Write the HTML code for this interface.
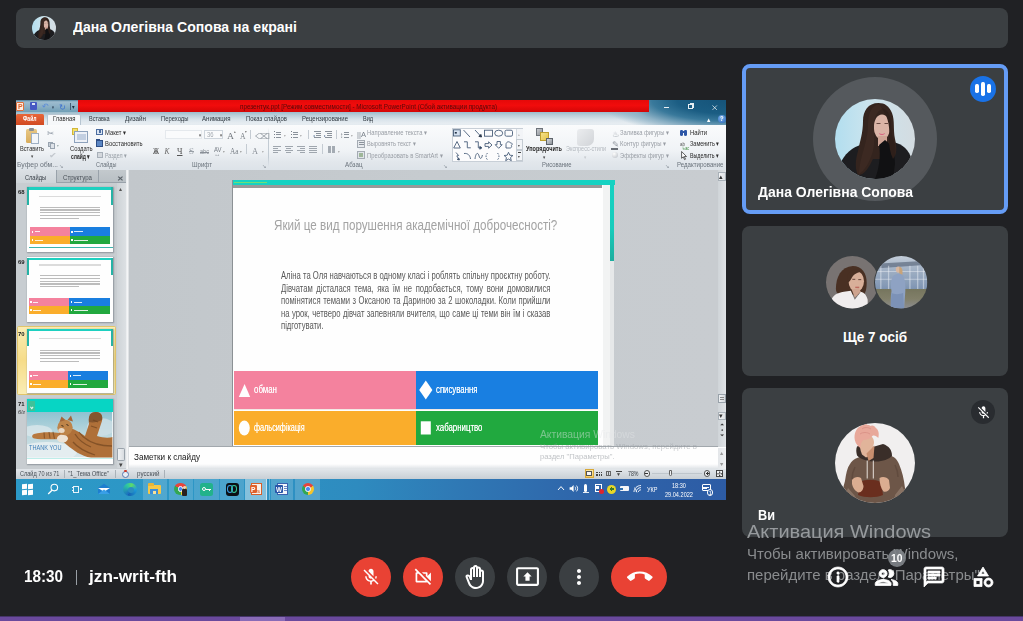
<!DOCTYPE html>
<html lang="uk"><head><meta charset="utf-8"><title>Meet</title>
<style>
html,body{margin:0;padding:0}
body{width:1023px;height:621px;overflow:hidden;background:#202124;position:relative;font-family:"Liberation Sans",sans-serif}
.t{position:absolute;white-space:nowrap;line-height:1;transform-origin:0 50%}
.r{position:absolute}
.c{position:absolute;border-radius:50%}
svg{position:absolute;overflow:visible}
#all{position:absolute;left:0;top:0;width:1023px;height:621px;opacity:.999}
#scr{position:absolute;left:16px;top:100px;width:710px;height:399.5px;overflow:hidden;will-change:transform}
#scri{position:absolute;left:-16px;top:-100px;width:1023px;height:621px;filter:blur(.35px)}
#scr .t,#scr .r,#scr svg{ }
</style></head><body><div id="all">

<div id="scr"><div id="scri">
<div class="r" style="left:16px;top:100px;width:710px;height:12.6px;background:linear-gradient(180deg,#4f7f9a 0,#9fbdd0 14%,#8db1c6 50%,#6b9cb4 100%);"></div>
<div class="r" style="left:16px;top:112px;width:710px;height:13.5px;background:linear-gradient(180deg,#9dbdcd 0,#bdd1dc 25%,#dbe5ec 55%,#e7edf2 80%,#e4ebf0 100%);"></div>
<div class="r" style="left:580px;top:100px;width:146px;height:25.5px;background:radial-gradient(ellipse 128px 36px at 100% 0%,#16547a 0,#1c5e84 38%,#3a7a9c 58%,#8fb3c7 78%,rgba(221,230,237,0) 100%);"></div>
<div class="r" style="left:77.5px;top:100px;width:571.5px;height:12.3px;background:linear-gradient(180deg,#e60a0a 0,#f20d0d 45%,#d40808 100%);"></div>
<div class="r" style="left:16.3px;top:101.8px;width:7.6px;height:8.8px;background:#fdeee4;border:0.8px solid #e0703c;border-radius:1px;box-sizing:border-box;"></div>
<span class="t" style="left:17.70px;top:103.00px;font-size:7.6px;color:#e0622c;font-weight:700;transform:scaleX(0.9074);">P</span>
<div class="r" style="left:30.2px;top:102.3px;width:6.4px;height:7.6px;background:#4659c4;border-radius:1px;"></div>
<div class="r" style="left:32px;top:102.5px;width:3.2px;height:2.6px;background:#dfe6f5;"></div>
<span class="t" style="left:42.30px;top:103.00px;font-size:8px;color:#5b8bd9;">↶</span>
<span class="t" style="left:51.50px;top:106.00px;font-size:4.5px;color:#2c3e55;transform:scaleX(0.7704);">▾</span>
<span class="t" style="left:59.00px;top:104.00px;font-size:8px;color:#3f72cf;transform:scaleX(1.0333);">↻</span>
<div class="r" style="left:69.5px;top:103.3px;width:0.8px;height:6.6px;background:#46607a;"></div>
<span class="t" style="left:72.00px;top:105.00px;font-size:5.5px;color:#1c2c3e;transform:scaleX(0.8727);">▾</span>
<span class="t" style="left:240.00px;top:103.00px;font-size:7.2px;color:#5a0a0a;transform:scaleX(0.8773);">презентук.ppt [Режим совместимости]  -  Microsoft PowerPoint (Сбой активации продукта)</span>
<div class="r" style="left:663.5px;top:107.3px;width:5.5px;height:1px;background:rgba(255,255,255,.9);"></div>
<div class="r" style="left:688px;top:104.2px;width:4.6px;height:4.6px;background:transparent;border:0.9px solid rgba(255,255,255,.9);box-sizing:border-box;"></div>
<div class="r" style="left:689.6px;top:103px;width:4.6px;height:4.6px;background:transparent;border-top:0.9px solid rgba(255,255,255,.9);border-right:0.9px solid rgba(255,255,255,.9);box-sizing:border-box;"></div>
<svg style="left:711.8px;top:104.8px" width="5.4" height="5.4" viewBox="0 0 7 7"><path d="M0.6 0.6L6.4 6.4M6.4 0.6L0.6 6.4" stroke="#fff" stroke-width="0.95" fill="none" opacity=".92"/></svg>
<div class="r" style="left:16px;top:113.8px;width:27.5px;height:11.4px;background:linear-gradient(180deg,#e8673a,#d24a22);border-radius:1.5px 1.5px 0 0;"></div>
<span class="t" style="left:22.70px;top:116.00px;font-size:6.8px;color:#fff;font-weight:700;transform:scaleX(0.7464);">Файл</span>
<div class="r" style="left:46.6px;top:113.8px;width:34.6px;height:12px;background:#f7f9fb;border:0.7px solid #b8c6d2;border-bottom:none;border-radius:2px 2px 0 0;box-sizing:border-box;"></div>
<span class="t" style="left:53.00px;top:116.00px;font-size:6.8px;color:#2e2e2e;transform:scaleX(0.8693);">Главная</span>
<span class="t" style="left:89.30px;top:116.00px;font-size:6.8px;color:#2f3840;transform:scaleX(0.8190);">Вставка</span>
<span class="t" style="left:124.50px;top:116.00px;font-size:6.8px;color:#2f3840;transform:scaleX(0.9187);">Дизайн</span>
<span class="t" style="left:160.50px;top:116.00px;font-size:6.8px;color:#2f3840;transform:scaleX(0.8622);">Переходы</span>
<span class="t" style="left:202.00px;top:116.00px;font-size:6.8px;color:#2f3840;transform:scaleX(0.8928);">Анимация</span>
<span class="t" style="left:245.60px;top:116.00px;font-size:6.8px;color:#2f3840;transform:scaleX(0.8736);">Показ слайдов</span>
<span class="t" style="left:301.70px;top:116.00px;font-size:6.8px;color:#2f3840;transform:scaleX(0.8760);">Рецензирование</span>
<span class="t" style="left:362.70px;top:116.00px;font-size:6.8px;color:#2f3840;transform:scaleX(0.8129);">Вид</span>
<span class="t" style="left:707.00px;top:116.00px;font-size:7px;color:#fff;transform:scaleX(0.9524);">▴</span>
<div class="c" style="left:717.5px;top:114.5px;width:8px;height:8px;background:radial-gradient(circle at 40% 35%,#7db4ec,#2a62b8)"></div>
<span class="t" style="left:719.80px;top:116.00px;font-size:6.5px;color:#fff;font-weight:700;transform:scaleX(0.9067);">?</span>
<div class="r" style="left:16px;top:125.3px;width:710px;height:45.5px;background:linear-gradient(180deg,#fbfcfd 0,#f1f4f7 55%,#e3e8ed 80%,#dde3e9 100%);"></div>
<div class="r" style="left:16px;top:170px;width:710px;height:1px;background:#a9b1b8;"></div>
<div class="r" style="left:63.5px;top:128px;width:0.8px;height:39px;background:linear-gradient(180deg,rgba(180,190,200,0),#c3ccd4 30%,#c3ccd4 75%,rgba(180,190,200,0));"></div>
<div class="r" style="left:149.5px;top:128px;width:0.8px;height:39px;background:linear-gradient(180deg,rgba(180,190,200,0),#c3ccd4 30%,#c3ccd4 75%,rgba(180,190,200,0));"></div>
<div class="r" style="left:267.8px;top:128px;width:0.8px;height:39px;background:linear-gradient(180deg,rgba(180,190,200,0),#c3ccd4 30%,#c3ccd4 75%,rgba(180,190,200,0));"></div>
<div class="r" style="left:448.5px;top:128px;width:0.8px;height:39px;background:linear-gradient(180deg,rgba(180,190,200,0),#c3ccd4 30%,#c3ccd4 75%,rgba(180,190,200,0));"></div>
<div class="r" style="left:672.5px;top:128px;width:0.8px;height:39px;background:linear-gradient(180deg,rgba(180,190,200,0),#c3ccd4 30%,#c3ccd4 75%,rgba(180,190,200,0));"></div>
<span class="t" style="left:17.00px;top:162.00px;font-size:6.6px;color:#6a737c;transform:scaleX(1.0416);">Буфер обм...</span>
<span class="t" style="left:96.00px;top:162.00px;font-size:6.6px;color:#6a737c;transform:scaleX(0.8343);">Слайды</span>
<span class="t" style="left:192.00px;top:162.00px;font-size:6.6px;color:#6a737c;transform:scaleX(0.9210);">Шрифт</span>
<span class="t" style="left:344.50px;top:162.00px;font-size:6.6px;color:#6a737c;transform:scaleX(0.9452);">Абзац</span>
<span class="t" style="left:541.50px;top:162.00px;font-size:6.6px;color:#6a737c;transform:scaleX(0.8875);">Рисование</span>
<span class="t" style="left:677.00px;top:162.00px;font-size:6.6px;color:#6a737c;transform:scaleX(0.9248);">Редактирование</span>
<span class="t" style="left:58.50px;top:164.00px;font-size:5px;color:#8a939c;transform:scaleX(1.0667);">↘</span>
<span class="t" style="left:262.00px;top:164.00px;font-size:5px;color:#8a939c;transform:scaleX(1.0667);">↘</span>
<span class="t" style="left:442.50px;top:164.00px;font-size:5px;color:#8a939c;transform:scaleX(1.0667);">↘</span>
<span class="t" style="left:665.00px;top:164.00px;font-size:5px;color:#8a939c;transform:scaleX(1.0667);">↘</span>
<div class="r" style="left:25.5px;top:129.2px;width:11px;height:13.5px;background:linear-gradient(180deg,#e9c987,#d9ad5c);border-radius:1.5px;"></div>
<div class="r" style="left:28.5px;top:128px;width:5px;height:2.6px;background:#8b8f95;border-radius:1px;"></div>
<div class="r" style="left:30.5px;top:133px;width:8.5px;height:10.8px;background:#f4f7fb;border:0.6px solid #9fb0c4;box-sizing:border-box;"></div>
<span class="t" style="left:19.70px;top:146.00px;font-size:6.8px;color:#2e2e2e;transform:scaleX(0.8326);">Вставить</span>
<span class="t" style="left:31.00px;top:155.00px;font-size:4.5px;color:#444;transform:scaleX(0.8889);">▾</span>
<span class="t" style="left:47.00px;top:130.00px;font-size:7.5px;color:#8d97a3;transform:scaleX(1.0667);">✂</span>
<div class="r" style="left:48px;top:141.5px;width:4.5px;height:5.5px;background:#c9d0d8;border:0.5px solid #9aa5b1;box-sizing:border-box;"></div>
<div class="r" style="left:50px;top:143px;width:4.5px;height:5.5px;background:#dfe4ea;border:0.5px solid #9aa5b1;box-sizing:border-box;"></div>
<span class="t" style="left:57.00px;top:144.00px;font-size:4px;color:#9aa;transform:scaleX(0.8333);">▾</span>
<span class="t" style="left:48.50px;top:152.00px;font-size:8px;color:#c3c8ce;transform:scaleX(1.1667);">✔</span>
<div class="r" style="left:71.6px;top:128.4px;width:6.5px;height:6.2px;background:#f5e26a;border:0.5px solid #d2b73a;box-sizing:border-box;"></div>
<div class="r" style="left:74.3px;top:131px;width:14px;height:11.5px;background:#eef2f8;border:0.7px solid #8ea3bd;box-sizing:border-box;"></div>
<div class="r" style="left:76.5px;top:134px;width:9.6px;height:5.5px;background:#c3d0e2;"></div>
<span class="t" style="left:69.50px;top:146.00px;font-size:6.8px;color:#2e2e2e;transform:scaleX(0.8706);">Создать</span>
<span class="t" style="left:71.00px;top:154.00px;font-size:6.8px;color:#2e2e2e;font-weight:700;transform:scaleX(0.7307);">слайд ▾</span>
<div class="r" style="left:96px;top:128.5px;width:6.5px;height:6px;background:#dbe5f3;border:0.7px solid #4d6ea0;box-sizing:border-box;"></div>
<div class="r" style="left:98.5px;top:130px;width:2.8px;height:3px;background:#4d6ea0;"></div>
<span class="t" style="left:104.50px;top:129.00px;font-size:7px;color:#2e2e2e;transform:scaleX(0.8331);">Макет ▾</span>
<div class="r" style="left:96px;top:140px;width:7px;height:6.5px;background:#5c87c4;border:0.6px solid #2e4f86;box-sizing:border-box;"></div>
<div class="r" style="left:96px;top:139px;width:3.5px;height:2.2px;background:#2e4f86;"></div>
<span class="t" style="left:104.50px;top:140.00px;font-size:7px;color:#2e2e2e;transform:scaleX(0.8366);">Восстановить</span>
<div class="r" style="left:96.5px;top:151.5px;width:6px;height:6px;background:#d5d9de;border:0.5px solid #a8b0b9;box-sizing:border-box;"></div>
<span class="t" style="left:104.50px;top:152.00px;font-size:7px;color:#9aa1a8;transform:scaleX(0.7583);">Раздел ▾</span>
<div class="r" style="left:165px;top:129.5px;width:37px;height:9.5px;background:#fbfcfd;border:0.6px solid #e6eaee;box-sizing:border-box;"></div>
<span class="t" style="left:199.00px;top:134.00px;font-size:4.5px;color:#555;transform:scaleX(0.8296);">▾</span>
<div class="r" style="left:204px;top:129.5px;width:19px;height:9.5px;background:#fbfcfd;border:0.6px solid #cfd6dd;box-sizing:border-box;"></div>
<span class="t" style="left:207.00px;top:132.00px;font-size:6.5px;color:#a5abb2;transform:scaleX(0.8990);">36</span>
<span class="t" style="left:219.50px;top:134.00px;font-size:4.5px;color:#555;transform:scaleX(0.8296);">▾</span>
<span class="t" style="left:227.00px;top:132.00px;font-size:9px;color:#6f757c;font-family:'Liberation Serif',serif;transform:scaleX(1.0770);">A</span>
<span class="t" style="left:233.50px;top:130.00px;font-size:4px;color:#777;transform:scaleX(0.8333);">▴</span>
<span class="t" style="left:239.50px;top:133.00px;font-size:7.5px;color:#7a8087;font-family:'Liberation Serif',serif;transform:scaleX(1.0154);">A</span>
<span class="t" style="left:244.50px;top:130.00px;font-size:4px;color:#777;transform:scaleX(0.8333);">▾</span>
<div class="r" style="left:250.3px;top:130px;width:0.7px;height:9px;background:#c5ccd3;"></div>
<span class="t" style="left:255.00px;top:133.00px;font-size:8px;color:#9aa1a8;transform:scaleX(1.3333);">⌫</span>
<span class="t" style="left:152.50px;top:148.00px;font-size:7.5px;color:#555;font-family:'Liberation Serif',serif;font-weight:700;transform:scaleX(0.8091);">Ж</span>
<span class="t" style="left:164.50px;top:148.00px;font-size:7.5px;color:#666;font-family:'Liberation Serif',serif;font-style:italic;">К</span>
<span class="t" style="left:176.50px;top:148.00px;font-size:7.5px;color:#555;font-family:'Liberation Serif',serif;transform:scaleX(1.1283);text-decoration:underline;">Ч</span>
<span class="t" style="left:189.00px;top:148.00px;font-size:7.5px;color:#9aa1a8;font-family:'Liberation Serif',serif;transform:scaleX(1.1987);text-decoration:line-through;">S</span>
<span class="t" style="left:200.00px;top:149.00px;font-size:6.5px;color:#8a9098;transform:scaleX(0.8588);text-decoration:line-through;">abc</span>
<span class="t" style="left:213.50px;top:147.00px;font-size:6.5px;color:#7a8088;transform:scaleX(0.9159);">AV</span>
<span class="t" style="left:214.00px;top:152.00px;font-size:5px;color:#7a8088;transform:scaleX(1.3000);">↔</span>
<span class="t" style="left:222.50px;top:150.00px;font-size:4px;color:#999;transform:scaleX(0.8333);">▾</span>
<span class="t" style="left:229.50px;top:148.00px;font-size:7.5px;color:#7a8088;font-family:'Liberation Serif',serif;transform:scaleX(0.9720);">Aa</span>
<span class="t" style="left:239.50px;top:150.00px;font-size:4px;color:#999;transform:scaleX(0.8333);">▾</span>
<div class="r" style="left:245.5px;top:144px;width:0.7px;height:9.5px;background:#c5ccd3;"></div>
<span class="t" style="left:252.00px;top:147.00px;font-size:8.5px;color:#8a9098;font-family:'Liberation Serif',serif;transform:scaleX(0.9774);">A</span>
<span class="t" style="left:261.50px;top:150.00px;font-size:4px;color:#aaa;transform:scaleX(0.8333);">▾</span>
<div class="r" style="left:274px;top:131.3px;width:1.2px;height:1.2px;background:#7b838c;"></div>
<div class="r" style="left:276.2px;top:131.5px;width:5px;height:0.8px;background:#8b939c;"></div>
<div class="r" style="left:274px;top:133.9px;width:1.2px;height:1.2px;background:#7b838c;"></div>
<div class="r" style="left:276.2px;top:134.1px;width:5px;height:0.8px;background:#8b939c;"></div>
<div class="r" style="left:274px;top:136.5px;width:1.2px;height:1.2px;background:#7b838c;"></div>
<div class="r" style="left:276.2px;top:136.7px;width:5px;height:0.8px;background:#8b939c;"></div>
<span class="t" style="left:283.50px;top:134.00px;font-size:4px;color:#aaa;transform:scaleX(0.8333);">▾</span>
<div class="r" style="left:290.5px;top:131.3px;width:1.2px;height:1.2px;background:#7b838c;"></div>
<div class="r" style="left:292.7px;top:131.5px;width:5px;height:0.8px;background:#8b939c;"></div>
<div class="r" style="left:290.5px;top:133.9px;width:1.2px;height:1.2px;background:#7b838c;"></div>
<div class="r" style="left:292.7px;top:134.1px;width:5px;height:0.8px;background:#8b939c;"></div>
<div class="r" style="left:290.5px;top:136.5px;width:1.2px;height:1.2px;background:#7b838c;"></div>
<div class="r" style="left:292.7px;top:136.7px;width:5px;height:0.8px;background:#8b939c;"></div>
<span class="t" style="left:300.00px;top:134.00px;font-size:4px;color:#aaa;transform:scaleX(0.8333);">▾</span>
<div class="r" style="left:308.3px;top:130px;width:0.7px;height:9px;background:#c5ccd3;"></div>
<div class="r" style="left:313.5px;top:130.8px;width:7px;height:0.8px;background:#8b939c;"></div>
<div class="r" style="left:315.5px;top:133.0px;width:5px;height:0.8px;background:#8b939c;"></div>
<div class="r" style="left:315.5px;top:135.20000000000002px;width:5px;height:0.8px;background:#8b939c;"></div>
<div class="r" style="left:313.5px;top:137.4px;width:7px;height:0.8px;background:#8b939c;"></div>
<span class="t" style="left:313.00px;top:134.00px;font-size:4px;color:#6b80a0;transform:scaleX(0.8333);">◂</span>
<div class="r" style="left:324.5px;top:130.8px;width:7px;height:0.8px;background:#8b939c;"></div>
<div class="r" style="left:326.5px;top:133.0px;width:5px;height:0.8px;background:#8b939c;"></div>
<div class="r" style="left:326.5px;top:135.20000000000002px;width:5px;height:0.8px;background:#8b939c;"></div>
<div class="r" style="left:324.5px;top:137.4px;width:7px;height:0.8px;background:#8b939c;"></div>
<span class="t" style="left:324.00px;top:134.00px;font-size:4px;color:#6b80a0;transform:scaleX(0.8333);">▸</span>
<div class="r" style="left:336.3px;top:130px;width:0.7px;height:9px;background:#c5ccd3;"></div>
<span class="t" style="left:340.00px;top:132.00px;font-size:8px;color:#7b838c;transform:scaleX(0.7500);">↕</span>
<div class="r" style="left:344px;top:131.5px;width:5px;height:0.8px;background:#8b939c;"></div>
<div class="r" style="left:344px;top:134.0px;width:5px;height:0.8px;background:#8b939c;"></div>
<div class="r" style="left:344px;top:136.5px;width:5px;height:0.8px;background:#8b939c;"></div>
<span class="t" style="left:351.00px;top:134.00px;font-size:4px;color:#aaa;transform:scaleX(0.8333);">▾</span>
<div class="r" style="left:273px;top:145.5px;width:7.5px;height:1px;background:#a0a7af;"></div>
<div class="r" style="left:273px;top:147.5px;width:5px;height:1px;background:#a0a7af;"></div>
<div class="r" style="left:273px;top:149.5px;width:7.5px;height:1px;background:#a0a7af;"></div>
<div class="r" style="left:273px;top:151.5px;width:5px;height:1px;background:#a0a7af;"></div>
<div class="r" style="left:285.0px;top:145.5px;width:7.5px;height:1px;background:#a0a7af;"></div>
<div class="r" style="left:286.25px;top:147.5px;width:5px;height:1px;background:#a0a7af;"></div>
<div class="r" style="left:285.0px;top:149.5px;width:7.5px;height:1px;background:#a0a7af;"></div>
<div class="r" style="left:286.25px;top:151.5px;width:5px;height:1px;background:#a0a7af;"></div>
<div class="r" style="left:297.0px;top:145.5px;width:7.5px;height:1px;background:#a0a7af;"></div>
<div class="r" style="left:299.5px;top:147.5px;width:5px;height:1px;background:#a0a7af;"></div>
<div class="r" style="left:297.0px;top:149.5px;width:7.5px;height:1px;background:#a0a7af;"></div>
<div class="r" style="left:299.5px;top:151.5px;width:5px;height:1px;background:#a0a7af;"></div>
<div class="r" style="left:309px;top:145.5px;width:7.5px;height:1px;background:#a0a7af;"></div>
<div class="r" style="left:309px;top:147.5px;width:7.5px;height:1px;background:#a0a7af;"></div>
<div class="r" style="left:309px;top:149.5px;width:7.5px;height:1px;background:#a0a7af;"></div>
<div class="r" style="left:309px;top:151.5px;width:7.5px;height:1px;background:#a0a7af;"></div>
<div class="r" style="left:321.5px;top:144px;width:0.7px;height:9.5px;background:#c5ccd3;"></div>
<div class="r" style="left:327.5px;top:145.5px;width:3.3px;height:7px;background:#a5acb4;"></div>
<div class="r" style="left:331.8px;top:145.5px;width:3.3px;height:7px;background:#a5acb4;"></div>
<span class="t" style="left:337.50px;top:150.00px;font-size:4px;color:#aaa;transform:scaleX(0.8333);">▾</span>
<span class="t" style="left:356.50px;top:131.00px;font-size:8px;color:#7b838c;transform:scaleX(0.9481);">||A</span>
<span class="t" style="left:367.00px;top:129.00px;font-size:7px;color:#9a9fa6;transform:scaleX(0.8361);">Направление текста ▾</span>
<div class="r" style="left:357px;top:139.5px;width:8px;height:8px;background:#e7eaee;border:0.6px solid #a5acb4;box-sizing:border-box;"></div>
<div class="r" style="left:358.5px;top:142.2px;width:5px;height:0.8px;background:#8b939c;"></div>
<div class="r" style="left:358.5px;top:144.2px;width:5px;height:0.8px;background:#8b939c;"></div>
<span class="t" style="left:367.00px;top:140.00px;font-size:7px;color:#9a9fa6;transform:scaleX(0.8101);">Выровнять текст ▾</span>
<div class="r" style="left:357px;top:151px;width:8px;height:8px;background:#e1e5ea;border:0.6px solid #a5acb4;box-sizing:border-box;"></div>
<div class="r" style="left:359px;top:153px;width:4px;height:4px;background:#9fb79a;"></div>
<span class="t" style="left:367.00px;top:152.00px;font-size:7px;color:#9a9fa6;transform:scaleX(0.8360);">Преобразовать в SmartArt ▾</span>
<div class="r" style="left:451.5px;top:128px;width:71.3px;height:33.5px;background:#fdfdfe;border:0.6px solid #c9d0d8;box-sizing:border-box;"></div>
<div class="r" style="left:515.5px;top:128.5px;width:7px;height:10.5px;background:#f3f5f8;border-left:0.6px solid #d5dbe1;box-sizing:border-box;"></div>
<div class="r" style="left:515.5px;top:139.3px;width:7px;height:10.5px;background:#f3f5f8;border:0.6px solid #c5ccd3;box-sizing:border-box;"></div>
<div class="r" style="left:515.5px;top:150.3px;width:7px;height:10.7px;background:#f3f5f8;border:0.6px solid #c5ccd3;box-sizing:border-box;"></div>
<span class="t" style="left:517.70px;top:133.00px;font-size:4px;color:#bbb;transform:scaleX(0.8667);">▴</span>
<span class="t" style="left:517.70px;top:144.00px;font-size:4px;color:#444;transform:scaleX(0.8667);">▾</span>
<span class="t" style="left:517.70px;top:155.00px;font-size:4px;color:#444;transform:scaleX(0.8667);">▾</span>
<div class="r" style="left:517.5px;top:152.3px;width:3.2px;height:0.7px;background:#444;"></div>
<svg style="left:451px;top:127px" width="62" height="36" viewBox="451 127 62 36" fill="none" stroke="#4a5f7a" stroke-width="0.9">
<rect x="453.5" y="129.8" width="6.8" height="6.2" fill="#d7e3f2"/><rect x="454.8" y="132" width="2" height="1.6" fill="#27364a" stroke="none"/>
<path d="M463.5 130l6.5 7"/><path d="M475 130l6 6.5"/><path d="M481.5 137l-2.6-0.6 2-2z" fill="#27364a" stroke="#27364a"/>
<rect x="484.5" y="130.2" width="8" height="6"/><ellipse cx="498.7" cy="133.2" rx="4" ry="3"/><rect x="505" y="130.2" width="7.5" height="6" rx="1.4"/>
<path d="M457 141.5l3.3 6.5h-6.6z"/><path d="M464 141.8h3.3v6h3.5"/><path d="M475 141.8h3.3v6h3"/><path d="M482 147.8l-2.2-1.4v2.8z" fill="#27364a"/>
<path d="M485 143.6h3.6v-1.8l3.4 3.2-3.4 3.2v-1.8H485z"/><path d="M497 141.5h3.4v3.2h1.8l-3.5 3.6-3.5-3.6h1.8z"/><path d="M506 148v-3.5c0-2.6 2.8-3.6 4.2-1.8 2-.2 2.6 2 1.2 2.8 .8 1.6-.4 2.6-1.6 2.5z"/>
<path d="M456 152.5l2.6 3-1.8.4 2.2 3.8" /><path d="M459.4 160l-2.2-.5 1.6-1.5z" fill="#27364a"/>
<path d="M464 153.5c3.5-.5 6 1.5 6.5 5.5"/><path d="M475 159c.8-6.5 3-7 4-3.2s2.6 3.4 3.4-.8"/>
<path d="M487.5 153c-2 1.8-2 5 0 6.8" stroke-dasharray="1.6 1.2"/><path d="M497.5 153c2 1.8 2 5 0 6.8" stroke-dasharray="1.6 1.2"/>
<path d="M508.5 152.3l1.3 2.9 3.1.3-2.4 2.1.8 3.1-2.8-1.7-2.8 1.7.8-3.1-2.4-2.1 3.1-.3z"/>
</svg>
<div class="r" style="left:535.5px;top:128px;width:7.5px;height:7.5px;background:linear-gradient(135deg,#c9ccd0,#8e9399);border:0.6px solid #6e747b;box-sizing:border-box;"></div>
<div class="r" style="left:539.5px;top:131.5px;width:9.5px;height:9.5px;background:linear-gradient(135deg,#f6e28a,#e6c54c);border:0.6px solid #bfa030;box-sizing:border-box;"></div>
<div class="r" style="left:545.5px;top:137.5px;width:7.5px;height:7.5px;background:linear-gradient(135deg,#d9dce0,#8e9399);border:0.6px solid #5e646b;box-sizing:border-box;"></div>
<span class="t" style="left:526.00px;top:146.00px;font-size:6.8px;color:#2a2a2a;font-weight:700;transform:scaleX(0.8144);">Упорядочить</span>
<span class="t" style="left:542.50px;top:156.00px;font-size:4.5px;color:#444;transform:scaleX(0.8889);">▾</span>
<div class="r" style="left:577px;top:128.5px;width:16.5px;height:17px;background:linear-gradient(135deg,#eceef0,#d2d5d9);border-radius:3px 3px 7px 3px;"></div>
<span class="t" style="left:565.50px;top:146.00px;font-size:6.8px;color:#b5bac0;transform:scaleX(0.8044);">Экспресс-стили</span>
<span class="t" style="left:584.00px;top:156.00px;font-size:4.5px;color:#c5c9ce;transform:scaleX(0.8889);">▾</span>
<span class="t" style="left:611.50px;top:131.00px;font-size:7.5px;color:#aab0b7;transform:scaleX(1.0667);">♨</span>
<span class="t" style="left:620.00px;top:129.00px;font-size:7px;color:#9a9fa6;transform:scaleX(0.8326);">Заливка фигуры ▾</span>
<span class="t" style="left:611.50px;top:141.00px;font-size:7.5px;color:#9aa0a7;transform:scaleX(1.0667);">✎</span>
<div class="r" style="left:611px;top:148.2px;width:7px;height:1.4px;background:#6b7077;"></div>
<span class="t" style="left:620.00px;top:140.00px;font-size:7px;color:#9a9fa6;transform:scaleX(0.8460);">Контур фигуры ▾</span>
<div class="c" style="left:611.5px;top:151.5px;width:6px;height:6px;background:radial-gradient(circle at 35% 30%,#fff,#b9bec5)"></div>
<span class="t" style="left:620.00px;top:152.00px;font-size:7px;color:#9a9fa6;transform:scaleX(0.8265);">Эффекты фигур ▾</span>
<div class="r" style="left:680px;top:130px;width:3.2px;height:6px;background:#2f58a8;border-radius:1.2px 1.2px 1.6px 1.6px;"></div>
<div class="r" style="left:684.3px;top:130px;width:3.2px;height:6px;background:#2f58a8;border-radius:1.2px 1.2px 1.6px 1.6px;"></div>
<div class="r" style="left:682.5px;top:131px;width:2.5px;height:2px;background:#2f58a8;"></div>
<span class="t" style="left:690.00px;top:129.00px;font-size:7px;color:#2a2a2a;transform:scaleX(0.8511);">Найти</span>
<span class="t" style="left:680.00px;top:142.00px;font-size:5px;color:#555;transform:scaleX(0.8990);">ab</span>
<span class="t" style="left:682.00px;top:147.00px;font-size:4.5px;color:#3a8a3a;transform:scaleX(0.7997);">↳ac</span>
<span class="t" style="left:690.00px;top:140.00px;font-size:7px;color:#2a2a2a;transform:scaleX(0.7883);">Заменить  ▾</span>
<svg style="left:681px;top:151px" width="6" height="9" viewBox="0 0 6 9"><path d="M0.6 0.5v6.8l1.7-1.5 1.2 2.8 1-.4-1.2-2.7h2.2z" fill="#fff" stroke="#222" stroke-width="0.7"/></svg>
<span class="t" style="left:690.00px;top:152.00px;font-size:7px;color:#2a2a2a;transform:scaleX(0.7597);">Выделить ▾</span>
<div class="r" style="left:16px;top:170px;width:110px;height:298.5px;background:#c9ced2;"></div>
<div class="r" style="left:16px;top:170.3px;width:110px;height:12.5px;background:linear-gradient(180deg,#c4cace,#b9c0c5);"></div>
<div class="r" style="left:16px;top:170.3px;width:40.5px;height:12.8px;background:linear-gradient(180deg,#dde2e6,#cfd5d9);border-right:0.7px solid #9aa3ab;box-sizing:border-box;"></div>
<div class="r" style="left:56.5px;top:170.3px;width:42px;height:12.3px;background:transparent;border-right:0.7px solid #9aa3ab;border-bottom:0.7px solid #9aa3ab;box-sizing:border-box;"></div>
<div class="r" style="left:98.5px;top:182px;width:27px;height:0.7px;background:#9aa3ab;"></div>
<span class="t" style="left:24.50px;top:174.00px;font-size:7px;color:#3a4148;transform:scaleX(0.8059);">Слайды</span>
<span class="t" style="left:63.00px;top:174.00px;font-size:7px;color:#4a5158;transform:scaleX(0.8732);">Структура</span>
<span class="t" style="left:117.00px;top:175.00px;font-size:7px;color:#4a5158;font-weight:700;transform:scaleX(1.1429);opacity:0.85;">✕</span>
<div class="r" style="left:116.5px;top:183px;width:9px;height:285px;background:linear-gradient(90deg,#cfd4d8,#dde1e4);"></div>
<span class="t" style="left:118.80px;top:186.00px;font-size:6px;color:#555;">▴</span>
<span class="t" style="left:118.60px;top:462.00px;font-size:6.5px;color:#444;transform:scaleX(1.0256);">▾</span>
<div class="r" style="left:117.2px;top:448px;width:7.6px;height:12.5px;background:linear-gradient(90deg,#f2f4f6,#d9dde1);border:0.6px solid #9aa3ab;border-radius:1.2px;box-sizing:border-box;"></div>
<div class="r" style="left:125.5px;top:170px;width:3.5px;height:298.5px;background:linear-gradient(90deg,#e9ecee,#f5f6f7 50%,#d5d9dc);"></div>
<div class="r" style="left:27.2px;top:187.0px;width:85.4px;height:64.6px;background:#fff;box-shadow:0 0 1.2px .5px rgba(90,98,106,.5);"></div>
<div class="r" style="left:27.3px;top:187.3px;width:85.4px;height:2.6px;background:#1fd1c1;"></div>
<div class="r" style="left:27.3px;top:187.3px;width:2px;height:17.5px;background:#27b3a6;"></div>
<div class="r" style="left:110.7px;top:187.3px;width:2px;height:17.5px;background:#27b3a6;"></div>
<span class="t" style="left:18.30px;top:189.00px;font-size:6.2px;color:#222;font-weight:700;transform:scaleX(0.9570);">68</span>
<div class="r" style="left:39px;top:195.70000000000002px;width:62px;height:1.3px;background:#dcdcdc;"></div>
<div class="r" style="left:40px;top:206.60000000000002px;width:60px;height:1.3px;background:#bdbdbd;"></div>
<div class="r" style="left:40px;top:209.35000000000002px;width:60px;height:1.3px;background:#bdbdbd;"></div>
<div class="r" style="left:40px;top:212.10000000000002px;width:60px;height:1.3px;background:#bdbdbd;"></div>
<div class="r" style="left:40px;top:214.85000000000002px;width:60px;height:1.3px;background:#bdbdbd;"></div>
<div class="r" style="left:40px;top:217.60000000000002px;width:39px;height:1.3px;background:#bdbdbd;"></div>
<div class="r" style="left:30px;top:227.3px;width:39.5px;height:8.5px;background:#f5839f;"></div>
<div class="r" style="left:69.5px;top:227.3px;width:40.0px;height:8.5px;background:#1a7fe0;"></div>
<div class="r" style="left:30px;top:235.70000000000002px;width:39.5px;height:8.5px;background:#fbae2c;"></div>
<div class="r" style="left:69.5px;top:235.70000000000002px;width:40.0px;height:8.5px;background:#22a93f;"></div>
<div class="r" style="left:31.5px;top:230.70000000000002px;width:1.6px;height:2.2px;background:#fff;"></div>
<div class="r" style="left:34.5px;top:231.3px;width:5px;height:1px;background:rgba(255,255,255,.85);"></div>
<div class="r" style="left:71.3px;top:230.70000000000002px;width:1.6px;height:2.2px;background:#fff;"></div>
<div class="r" style="left:74.3px;top:231.3px;width:8.5px;height:1px;background:rgba(255,255,255,.85);"></div>
<div class="r" style="left:31.5px;top:239.10000000000002px;width:1.6px;height:2.2px;background:#fff;"></div>
<div class="r" style="left:34.5px;top:239.70000000000002px;width:8px;height:1px;background:rgba(255,255,255,.85);"></div>
<div class="r" style="left:71.3px;top:239.10000000000002px;width:1.6px;height:2.2px;background:#fff;"></div>
<div class="r" style="left:74.3px;top:239.70000000000002px;width:14px;height:1px;background:rgba(255,255,255,.85);"></div>
<div class="r" style="left:29px;top:247.3px;width:83.5px;height:0.8px;background:#3fb5ad;"></div>
<div class="r" style="left:27.2px;top:257.2px;width:85.4px;height:64.6px;background:#fff;box-shadow:0 0 1.2px .5px rgba(90,98,106,.5);"></div>
<div class="r" style="left:27.3px;top:257.5px;width:85.4px;height:2.6px;background:#1fd1c1;"></div>
<div class="r" style="left:27.3px;top:257.5px;width:2px;height:17.5px;background:#27b3a6;"></div>
<div class="r" style="left:110.7px;top:257.5px;width:2px;height:17.5px;background:#27b3a6;"></div>
<span class="t" style="left:18.30px;top:259.00px;font-size:6.2px;color:#222;font-weight:700;transform:scaleX(0.9570);">69</span>
<div class="r" style="left:39px;top:264.4px;width:62px;height:1.3px;background:#dcdcdc;"></div>
<div class="r" style="left:40px;top:275.0px;width:60px;height:1.3px;background:#bdbdbd;"></div>
<div class="r" style="left:40px;top:277.75px;width:60px;height:1.3px;background:#bdbdbd;"></div>
<div class="r" style="left:40px;top:280.5px;width:60px;height:1.3px;background:#bdbdbd;"></div>
<div class="r" style="left:40px;top:283.25px;width:60px;height:1.3px;background:#bdbdbd;"></div>
<div class="r" style="left:40px;top:286.0px;width:39px;height:1.3px;background:#bdbdbd;"></div>
<div class="r" style="left:28.5px;top:297.5px;width:40.5px;height:8.5px;background:#f5839f;"></div>
<div class="r" style="left:69px;top:297.5px;width:40.8px;height:8.5px;background:#1a7fe0;"></div>
<div class="r" style="left:28.5px;top:305.9px;width:40.5px;height:8.5px;background:#fbae2c;"></div>
<div class="r" style="left:69px;top:305.9px;width:40.8px;height:8.5px;background:#22a93f;"></div>
<div class="r" style="left:30.0px;top:300.9px;width:1.6px;height:2.2px;background:#fff;"></div>
<div class="r" style="left:33.0px;top:301.5px;width:5px;height:1px;background:rgba(255,255,255,.85);"></div>
<div class="r" style="left:70.8px;top:300.9px;width:1.6px;height:2.2px;background:#fff;"></div>
<div class="r" style="left:73.8px;top:301.5px;width:8.5px;height:1px;background:rgba(255,255,255,.85);"></div>
<div class="r" style="left:30.0px;top:309.3px;width:1.6px;height:2.2px;background:#fff;"></div>
<div class="r" style="left:33.0px;top:309.90000000000003px;width:8px;height:1px;background:rgba(255,255,255,.85);"></div>
<div class="r" style="left:70.8px;top:309.3px;width:1.6px;height:2.2px;background:#fff;"></div>
<div class="r" style="left:73.8px;top:309.90000000000003px;width:14px;height:1px;background:rgba(255,255,255,.85);"></div>
<div class="r" style="left:16.5px;top:325.8px;width:99.5px;height:69.5px;background:linear-gradient(180deg,#fbeeb5,#f7dd8a 50%,#fbeeb5);border:0.7px solid #e3c66a;border-radius:1.5px;box-sizing:border-box;"></div>
<div class="r" style="left:27.2px;top:328.5px;width:85.4px;height:64.6px;background:#fff;box-shadow:0 0 1.2px .5px rgba(90,98,106,.5);"></div>
<div class="r" style="left:27.3px;top:328.8px;width:85.4px;height:2.6px;background:#1fd1c1;"></div>
<div class="r" style="left:27.3px;top:328.8px;width:2px;height:17.5px;background:#27b3a6;"></div>
<div class="r" style="left:110.7px;top:328.8px;width:2px;height:17.5px;background:#27b3a6;"></div>
<span class="t" style="left:18.30px;top:331.00px;font-size:6.2px;color:#222;font-weight:700;transform:scaleX(0.9570);">70</span>
<div class="r" style="left:39px;top:338.2px;width:62px;height:1.3px;background:#dcdcdc;"></div>
<div class="r" style="left:40px;top:349.6px;width:60px;height:1.3px;background:#bdbdbd;"></div>
<div class="r" style="left:40px;top:352.35px;width:60px;height:1.3px;background:#bdbdbd;"></div>
<div class="r" style="left:40px;top:355.1px;width:60px;height:1.3px;background:#bdbdbd;"></div>
<div class="r" style="left:40px;top:357.85px;width:60px;height:1.3px;background:#bdbdbd;"></div>
<div class="r" style="left:40px;top:360.6px;width:39px;height:1.3px;background:#bdbdbd;"></div>
<div class="r" style="left:28.5px;top:371.3px;width:39.5px;height:8.5px;background:#f5839f;"></div>
<div class="r" style="left:68px;top:371.3px;width:40px;height:8.5px;background:#1a7fe0;"></div>
<div class="r" style="left:28.5px;top:379.7px;width:39.5px;height:8.5px;background:#fbae2c;"></div>
<div class="r" style="left:68px;top:379.7px;width:40px;height:8.5px;background:#22a93f;"></div>
<div class="r" style="left:30.0px;top:374.7px;width:1.6px;height:2.2px;background:#fff;"></div>
<div class="r" style="left:33.0px;top:375.3px;width:5px;height:1px;background:rgba(255,255,255,.85);"></div>
<div class="r" style="left:69.8px;top:374.7px;width:1.6px;height:2.2px;background:#fff;"></div>
<div class="r" style="left:72.8px;top:375.3px;width:8.5px;height:1px;background:rgba(255,255,255,.85);"></div>
<div class="r" style="left:30.0px;top:383.1px;width:1.6px;height:2.2px;background:#fff;"></div>
<div class="r" style="left:33.0px;top:383.70000000000005px;width:8px;height:1px;background:rgba(255,255,255,.85);"></div>
<div class="r" style="left:69.8px;top:383.1px;width:1.6px;height:2.2px;background:#fff;"></div>
<div class="r" style="left:72.8px;top:383.70000000000005px;width:14px;height:1px;background:rgba(255,255,255,.85);"></div>
<div class="r" style="left:27.2px;top:399.2px;width:85.4px;height:64.6px;background:#fff;box-shadow:0 0 1.2px .5px rgba(90,98,106,.5);"></div>
<div class="r" style="left:27.2px;top:399.2px;width:85.4px;height:12.9px;background:#08d6c5;"></div>
<div class="r" style="left:28px;top:401.0px;width:6.5px;height:10px;background:#3fc29a;"></div>
<span class="t" style="left:28.80px;top:402.00px;font-size:9px;color:#e8fff6;font-weight:700;transform:scaleX(0.7407);">⌄</span>
<span class="t" style="left:18.30px;top:401.00px;font-size:6.2px;color:#222;font-weight:700;transform:scaleX(0.9570);">71</span>
<span class="t" style="left:18.30px;top:410.00px;font-size:5.8px;color:#333;font-style:italic;transform:scaleX(0.9050);">б/г</span>
<svg style="left:27.2px;top:412.1px" width="85.4" height="45.6" viewBox="0 0 85.4 45.6">
<defs><linearGradient id="sky" x1="0" y1="0" x2="0" y2="1"><stop offset="0" stop-color="#8fc3d2"/><stop offset=".45" stop-color="#b9d7de"/><stop offset="1" stop-color="#d8e6ea"/></linearGradient>
<clipPath id="cc"><rect width="85.4" height="45.6"/></clipPath></defs>
<g clip-path="url(#cc)"><rect width="85.4" height="45.6" fill="url(#sky)"/>
<ellipse cx="10" cy="19" rx="15" ry="6" fill="#dfeaee" opacity=".75"/><ellipse cx="20" cy="40" rx="30" ry="10" fill="#e6eef1" opacity=".95"/><ellipse cx="74" cy="15" rx="14" ry="9" fill="#cfe0e6" opacity=".8"/>
<path d="M33 21C24 19.500 14 20 7 22c-2.500 1-2.500 4 .5 4.500 6 1 16 1 26 .5z" fill="#b97a40"/>
<path d="M34 17c8-5 18 3 24 7l4-12c-1-8 2-12 7-12s7 4 6 9l-5 15c6 2 12 2 16 1v21H64c-10-2-18-8-24-13-4-3-7-7-8-11z" fill="#b0713a"/>
<path d="M62 10c-1-7 2-10 7-10s7 4 6 8c-4 2-9 3-13 2z" fill="#86562e"/>
<ellipse cx="35.500" cy="26.500" rx="5.500" ry="4" fill="#eee3d6"/>
<circle cx="38" cy="15.500" r="7.700" fill="#bf854a"/>
<path d="M32.500 10l2-5.500 4 3.500zM40.500 8l3.500-4.500 2 6z" fill="#a5673a"/>
<ellipse cx="34.500" cy="18.500" rx="3.200" ry="2.500" fill="#ead9c6"/>
<path d="M34.500 13.500l2 .8M39.500 12.500l2 1" stroke="#3a2a1a" stroke-width="1"/>
<path d="M48 22c3 5 9 10 16 13M52 20c4 6 12 11 22 13M58 26c6 5 16 8 27 8M46 30c5 6 13 10 22 13M66 8l5 2M64 14l6 2" stroke="#6e431f" stroke-width="1.300" fill="none" opacity=".65"/>
<path d="M26 20l1.500 7M22 20l1 6.500M17 20.500l.5 6" stroke="#6e431f" stroke-width="1.200" opacity=".6"/>
</g></svg>
<span class="t" style="left:29.00px;top:444.00px;font-size:7px;color:#3f7fb8;transform:scaleX(0.7983);">THANK YOU</span>
<div class="r" style="left:27.2px;top:457.7px;width:85.4px;height:1.6px;background:#bfeeea;"></div>
<div class="r" style="left:129px;top:170px;width:589px;height:277.5px;background:linear-gradient(90deg,#c3c8cc 0,#c7ccd0 50%,#c9cdd1 100%);"></div>
<div class="r" style="left:717.5px;top:170px;width:8.5px;height:277.5px;background:linear-gradient(90deg,#d0d5d9,#e1e4e7);"></div>
<div class="r" style="left:717.8px;top:171.5px;width:8px;height:9px;background:linear-gradient(90deg,#f4f5f7,#dfe2e5);border:0.5px solid #aab2b9;box-sizing:border-box;"></div>
<span class="t" style="left:719.20px;top:174.00px;font-size:6.5px;color:#333;transform:scaleX(1.0256);">▴</span>
<div class="r" style="left:718px;top:394px;width:8px;height:8.5px;background:linear-gradient(90deg,#f0f2f4,#d5d9dd);border:0.5px solid #9aa3ab;box-sizing:border-box;"></div>
<div class="r" style="left:720px;top:397px;width:4px;height:0.7px;background:#888;"></div>
<div class="r" style="left:720px;top:398.7px;width:4px;height:0.7px;background:#888;"></div>
<div class="r" style="left:718px;top:411.5px;width:8px;height:8px;background:linear-gradient(90deg,#f4f5f7,#dfe2e5);border:0.5px solid #aab2b9;box-sizing:border-box;"></div>
<span class="t" style="left:719.20px;top:413.00px;font-size:6.5px;color:#333;transform:scaleX(1.0256);">▾</span>
<span class="t" style="left:720.00px;top:422.00px;font-size:5px;color:#333;transform:scaleX(1.0667);">⏶</span>
<span class="t" style="left:720.70px;top:429.00px;font-size:3.5px;color:#333;transform:scaleX(1.1826);">●</span>
<span class="t" style="left:720.00px;top:433.00px;font-size:5px;color:#333;transform:scaleX(1.0667);">⏷</span>
<div class="r" style="left:232.3px;top:180px;width:1.4px;height:266px;background:#8d9296;"></div>
<div class="r" style="left:233px;top:184px;width:381px;height:262px;background:#fff;"></div>
<div class="r" style="left:233px;top:180px;width:381.5px;height:4.5px;background:#17d3c3;"></div>
<div class="r" style="left:233.5px;top:181.8px;width:33.5px;height:0.9px;background:#6fe07a;"></div>
<div class="r" style="left:609.8px;top:180px;width:4.7px;height:80.5px;background:linear-gradient(180deg,#17d3c3 0,#19cdbd 60%,#1fae9f 100%);"></div>
<div class="r" style="left:609.8px;top:260.5px;width:4.7px;height:185.5px;background:#e7e9ea;"></div>
<div class="r" style="left:233.3px;top:184.5px;width:369.2px;height:4px;background:#9a9a9a;"></div>
<div class="r" style="left:602.5px;top:184.5px;width:7.3px;height:261.5px;background:#f3f4f4;"></div>
<div class="r" style="left:233.3px;top:188.4px;width:369.2px;height:257.6px;background:#fff;"></div>
<span class="t" style="left:274.00px;top:217.00px;font-size:15.4px;color:#a4a4a4;transform:scaleX(0.7558);">Який це вид порушення академічної доброчесності?</span>
<span class="t" style="left:281.30px;top:271.00px;font-size:10.3px;color:#595959;transform:scaleX(0.7455);word-spacing:0.000px;">Аліна та Оля навчаються в одному класі і роблять спільну проєктну роботу.</span>
<span class="t" style="left:281.30px;top:284.00px;font-size:10.3px;color:#595959;transform:scaleX(0.7455);word-spacing:1.880px;">Дівчатам дісталася тема, яка їм не подобається, тому вони домовилися</span>
<span class="t" style="left:281.30px;top:296.00px;font-size:10.3px;color:#595959;transform:scaleX(0.7455);word-spacing:0.544px;">помінятися темами з Оксаною та Дариною за 2 шоколадки. Коли прийшли</span>
<span class="t" style="left:281.30px;top:309.00px;font-size:10.3px;color:#595959;transform:scaleX(0.7455);word-spacing:0.388px;">на урок, четверо дівчат запевняли вчителя, що саме ці теми він їм і сказав</span>
<span class="t" style="left:281.30px;top:321.00px;font-size:10.3px;color:#595959;transform:scaleX(0.7455);">підготувати.</span>
<div class="r" style="left:233.5px;top:371.2px;width:182.2px;height:38px;background:#f5839f;"></div>
<div class="r" style="left:415.7px;top:371.2px;width:182.5px;height:38px;background:#1a80e2;"></div>
<div class="r" style="left:233.5px;top:410.5px;width:182.2px;height:34.1px;background:#fbae2c;"></div>
<div class="r" style="left:415.7px;top:410.5px;width:182.5px;height:34.1px;background:#22aa40;"></div>
<div class="r" style="left:233.5px;top:409.2px;width:364.7px;height:1.3px;background:#f3e9e4;"></div>
<svg style="left:233px;top:371px" width="366" height="75" viewBox="233 371 366 75" fill="#fff"><path d="M244.6 384l5.6 13h-11.4z"/><path d="M425.8 380.5l6.6 9.5-6.6 9.5-6.6-9.5z"/><ellipse cx="244.3" cy="428" rx="5.5" ry="7.4"/><rect x="420.8" y="421.3" width="10" height="13.2"/></svg>
<span class="t" style="left:253.80px;top:383.00px;font-size:11.6px;color:#fff;transform:scaleX(0.6830);text-shadow:0 0 .5px rgba(255,255,255,.8);">обман</span>
<span class="t" style="left:435.50px;top:383.00px;font-size:11.6px;color:#fff;transform:scaleX(0.6722);text-shadow:0 0 .5px rgba(255,255,255,.8);">списування</span>
<span class="t" style="left:253.80px;top:421.00px;font-size:11.6px;color:#fff;transform:scaleX(0.6299);text-shadow:0 0 .5px rgba(255,255,255,.8);">фальсифікація</span>
<span class="t" style="left:435.50px;top:421.00px;font-size:11.6px;color:#fff;transform:scaleX(0.6766);text-shadow:0 0 .5px rgba(255,255,255,.8);">хабарництво</span>
<div class="r" style="left:129px;top:445.9px;width:589px;height:1.3px;background:#a3a9ae;"></div>
<span class="t" style="left:540.00px;top:429.00px;font-size:10.6px;color:rgba(228,231,233,.46);transform:scaleX(0.9725);">Активация Windows</span>
<div class="r" style="left:129px;top:447.2px;width:597px;height:21.4px;background:#fff;"></div>
<div class="r" style="left:129px;top:463.5px;width:597px;height:5px;background:linear-gradient(180deg,rgba(220,225,229,0),#dfe3e7);"></div>
<span class="t" style="left:134.00px;top:453.00px;font-size:8.8px;color:#1a1a1a;transform:scaleX(0.9260);">Заметки к слайду</span>
<span class="t" style="left:540.00px;top:443.00px;font-size:7.6px;color:rgba(150,155,160,.55);transform:scaleX(1.0273);">Чтобы активировать Windows, перейдите в</span>
<span class="t" style="left:540.00px;top:453.00px;font-size:7.6px;color:rgba(150,155,160,.6);">раздел &quot;Параметры&quot;.</span>
<div class="r" style="left:717.5px;top:447.8px;width:8.5px;height:20.8px;background:linear-gradient(90deg,#e4e7ea,#f1f2f4);"></div>
<span class="t" style="left:719.50px;top:451.00px;font-size:5.5px;color:#999;transform:scaleX(1.0909);">▴</span>
<span class="t" style="left:719.50px;top:462.00px;font-size:5.5px;color:#999;transform:scaleX(1.0909);">▾</span>
<div class="r" style="left:16px;top:468.5px;width:710px;height:10.5px;background:linear-gradient(180deg,#e3e7eb 0,#d3d9de 60%,#c9d0d6 100%);"></div>
<span class="t" style="left:19.70px;top:471.00px;font-size:6.4px;color:#4a5158;transform:scaleX(0.8718);">Слайд 70 из 71</span>
<span class="t" style="left:68.00px;top:471.00px;font-size:6.4px;color:#4a5158;transform:scaleX(0.9089);">&quot;1_Тема Office&quot;</span>
<span class="t" style="left:136.70px;top:471.00px;font-size:6.4px;color:#4a5158;transform:scaleX(0.9797);">русский</span>
<div class="r" style="left:63.5px;top:469.5px;width:0.7px;height:8.5px;background:#aab2b9;"></div>
<div class="r" style="left:115px;top:469.5px;width:0.7px;height:8.5px;background:#aab2b9;"></div>
<div class="r" style="left:163.5px;top:469.5px;width:0.7px;height:8.5px;background:#aab2b9;"></div>
<div class="c" style="left:121.5px;top:470.5px;width:5.5px;height:5.5px;background:#e9eef5;border:0.6px solid #5a7ab0"></div>
<div class="r" style="left:124px;top:469.8px;width:3.4px;height:2.6px;background:#d03a2a;border-radius:1px;"></div>
<div class="r" style="left:584.5px;top:469.3px;width:9px;height:9px;background:linear-gradient(180deg,#fbe8a6,#f5cf6a);border:0.6px solid #d9a93a;box-sizing:border-box;"></div>
<div class="r" style="left:586.3px;top:471.3px;width:5.5px;height:5px;background:#f7f7f7;border:0.6px solid #555;box-sizing:border-box;"></div>
<div class="r" style="left:596.3px;top:471.5px;width:1.6px;height:1.8px;background:#444;"></div>
<div class="r" style="left:596.3px;top:474.1px;width:1.6px;height:1.8px;background:#444;"></div>
<div class="r" style="left:598.5px;top:471.5px;width:1.6px;height:1.8px;background:#444;"></div>
<div class="r" style="left:598.5px;top:474.1px;width:1.6px;height:1.8px;background:#444;"></div>
<div class="r" style="left:600.6999999999999px;top:471.5px;width:1.6px;height:1.8px;background:#444;"></div>
<div class="r" style="left:600.6999999999999px;top:474.1px;width:1.6px;height:1.8px;background:#444;"></div>
<div class="r" style="left:606px;top:471.3px;width:4.6px;height:5px;background:transparent;border:0.6px solid #666;box-sizing:border-box;"></div>
<div class="r" style="left:608.2px;top:471.3px;width:0.6px;height:5px;background:#666;"></div>
<span class="t" style="left:616.00px;top:472.00px;font-size:5px;color:#444;transform:scaleX(1.0103);">▼</span>
<div class="r" style="left:615.5px;top:470.8px;width:6px;height:0.7px;background:#444;"></div>
<span class="t" style="left:627.80px;top:470.00px;font-size:7px;color:#3a4148;transform:scaleX(0.7494);">78%</span>
<div class="c" style="left:643.5px;top:470.2px;width:6.6px;height:6.6px;border:0.7px solid #555;box-sizing:border-box;background:#eef0f2"></div>
<div class="r" style="left:645.2px;top:473.2px;width:3.2px;height:0.7px;background:#333;"></div>
<div class="r" style="left:652px;top:473.4px;width:50px;height:0.8px;background:#c0c7cd;"></div>
<div class="r" style="left:669.3px;top:470.3px;width:2.6px;height:6px;background:#eef0f2;border:0.6px solid #666;border-radius:0 0 1.3px 1.3px;box-sizing:border-box;"></div>
<div class="c" style="left:703.8px;top:470.2px;width:6.6px;height:6.6px;border:0.7px solid #555;box-sizing:border-box;background:#eef0f2"></div>
<div class="r" style="left:705.5px;top:473.2px;width:3.2px;height:0.7px;background:#333;"></div>
<div class="r" style="left:706.75px;top:471.9px;width:0.7px;height:3.2px;background:#333;"></div>
<div class="r" style="left:715.5px;top:470px;width:7px;height:7px;background:#f4f5f6;border:0.7px solid #444;box-sizing:border-box;"></div>
<span class="t" style="left:716.80px;top:472.00px;font-size:5.5px;color:#333;transform:scaleX(1.0667);">✣</span>
<div class="r" style="left:16px;top:479px;width:710px;height:20.6px;background:linear-gradient(90deg,#2d9ac8 0,#2e96c6 30%,#2f8cc0 48%,#307ab6 62%,#3066ab 80%,#2e5da6 100%);"></div>
<div class="r" style="left:143px;top:479px;width:23.69999999999999px;height:20.6px;background:rgba(255,255,255,.17);"></div>
<div class="r" style="left:169px;top:479px;width:23.80000000000001px;height:20.6px;background:rgba(255,255,255,.17);"></div>
<div class="r" style="left:194px;top:479px;width:24.599999999999994px;height:20.6px;background:rgba(255,255,255,.15);"></div>
<div class="r" style="left:220px;top:479px;width:24px;height:20.6px;background:rgba(255,255,255,.15);"></div>
<div class="r" style="left:245px;top:479px;width:21.69999999999999px;height:20.6px;background:rgba(255,255,255,.42);"></div>
<div class="r" style="left:270.6px;top:479px;width:22.0px;height:20.6px;background:rgba(255,255,255,.18);"></div>
<div class="r" style="left:295px;top:479px;width:25.399999999999977px;height:20.6px;background:rgba(255,255,255,.18);"></div>
<div class="r" style="left:266px;top:479px;width:1.2px;height:20.6px;background:rgba(255,255,255,.55);"></div>
<div class="r" style="left:269px;top:479px;width:1px;height:20.6px;background:rgba(255,255,255,.3);"></div>
<div class="r" style="left:22.0px;top:484.0px;width:5.2px;height:5px;background:#fff;transform:skewY(-6deg);"></div>
<div class="r" style="left:22.0px;top:489.6px;width:5.2px;height:5px;background:#fff;transform:skewY(-6deg);"></div>
<div class="r" style="left:27.8px;top:484.0px;width:5.2px;height:5px;background:#fff;transform:skewY(-6deg);"></div>
<div class="r" style="left:27.8px;top:489.6px;width:5.2px;height:5px;background:#fff;transform:skewY(-6deg);"></div>
<svg style="left:47px;top:483px" width="12" height="12" viewBox="0 0 12 12"><circle cx="7.3" cy="4.6" r="3.3" fill="none" stroke="#fff" stroke-width="1.1"/><path d="M5 7.2L1.2 11" stroke="#fff" stroke-width="1.3"/></svg>
<div class="r" style="left:73.3px;top:485.5px;width:6px;height:7px;background:transparent;border:0.9px solid #e8f3fa;box-sizing:border-box;"></div>
<div class="r" style="left:72px;top:487.3px;width:1.4px;height:0.8px;background:#e8f3fa;"></div>
<div class="r" style="left:72px;top:490.3px;width:1.4px;height:0.8px;background:#e8f3fa;"></div>
<div class="r" style="left:80.3px;top:487.5px;width:2px;height:2.4px;background:#e8f3fa;"></div>
<svg style="left:97px;top:483px" width="14" height="12" viewBox="0 0 14 12"><path d="M1 5L7 .8 13 5v6H1z" fill="#1e7fd0"/><path d="M1 5l6 3.8L13 5" fill="#fff"/><path d="M1 11l6-4.4 6 4.4z" fill="#3aa0e8"/></svg>
<div class="c" style="left:123.3px;top:482.8px;width:13.4px;height:13.4px;background:conic-gradient(from 200deg,#1b6fc2,#2fc8a2 35%,#5fdc6a 50%,#1f9bd8 70%,#1660b0)"></div>
<div class="c" style="left:127.5px;top:486.5px;width:6px;height:6px;background:#2a8ec2"></div>
<div class="r" style="left:148px;top:484.5px;width:12.5px;height:9px;background:#f7c94a;border-radius:1px;"></div>
<div class="r" style="left:148px;top:483.3px;width:5.5px;height:2.5px;background:#e9b63a;border-radius:1px 1px 0 0;"></div>
<div class="r" style="left:150.3px;top:489.2px;width:8px;height:5px;background:#3f8fd8;"></div>
<div class="r" style="left:152.5px;top:491px;width:3.5px;height:3.2px;background:#f7e29a;"></div>
<div class="c" style="left:174.3px;top:482.5px;width:12.4px;height:12.4px;background:conic-gradient(from -60deg,#e8453c 0 120deg,#f7c52c 120deg 240deg,#34a853 240deg 360deg)"></div>
<div class="c" style="left:177.648px;top:485.848px;width:5.704000000000001px;height:5.704000000000001px;background:#4a8af4;border:0.8680000000000001px solid #fff;box-sizing:border-box"></div>
<div class="r" style="left:181.5px;top:487.5px;width:5.5px;height:8.5px;background:#2a2220;border-radius:2.5px 2.5px 1px 1px;"></div>
<div class="c" style="left:182.6px;top:485.6px;width:3.4px;height:3.6px;background:#e9d5c3"></div>
<div class="r" style="left:199.5px;top:483px;width:13px;height:12.5px;background:#23b38c;border-radius:2.5px;"></div>
<div class="c" style="left:201.5px;top:487px;width:4.4px;height:4.4px;border:1.2px solid #fff;box-sizing:border-box"></div>
<div class="r" style="left:205.5px;top:488.6px;width:5.5px;height:1.2px;background:#fff;"></div>
<div class="r" style="left:209px;top:489px;width:1.2px;height:2.2px;background:#fff;"></div>
<div class="r" style="left:225.5px;top:482.7px;width:13px;height:13px;background:#0c1116;border-radius:3px;"></div>
<div class="c" style="left:227px;top:485.2px;width:6.4px;height:7.4px;border:1.3px solid #3ba0e8;box-sizing:border-box"></div>
<div class="c" style="left:231px;top:485.2px;width:6.4px;height:7.4px;border:1.3px solid #36c79a;box-sizing:border-box"></div>
<div class="r" style="left:250.5px;top:483.2px;width:11px;height:11.5px;background:#fbf1ea;border:0.7px solid #d8602a;box-sizing:border-box;"></div>
<div class="r" style="left:249.5px;top:485px;width:7px;height:8px;background:#e0622c;border-radius:1px;"></div>
<span class="t" style="left:251.00px;top:486.00px;font-size:7px;color:#fff;font-weight:700;transform:scaleX(0.9423);">P</span>
<span class="t" style="left:257.30px;top:488.00px;font-size:6px;color:#d8602a;font-weight:700;transform:scaleX(0.8990);">s</span>
<div class="r" style="left:276.5px;top:483.2px;width:11px;height:11.5px;background:#f4f7fb;border:0.7px solid #3a62b0;box-sizing:border-box;"></div>
<div class="r" style="left:275px;top:485px;width:7.5px;height:7.5px;background:#2a56a8;border-radius:1px;"></div>
<span class="t" style="left:275.80px;top:487.00px;font-size:6.6px;color:#fff;font-weight:700;transform:scaleX(0.9632);">W</span>
<div class="r" style="left:283.5px;top:486px;width:3px;height:0.7px;background:#6a8ac8;"></div>
<div class="r" style="left:283.5px;top:488px;width:3px;height:0.7px;background:#6a8ac8;"></div>
<div class="r" style="left:283.5px;top:490px;width:3px;height:0.7px;background:#6a8ac8;"></div>
<div class="c" style="left:302px;top:483px;width:12px;height:12px;background:conic-gradient(from -60deg,#e8453c 0 120deg,#f7c52c 120deg 240deg,#34a853 240deg 360deg)"></div>
<div class="c" style="left:305.24px;top:486.24px;width:5.5200000000000005px;height:5.5200000000000005px;background:#4a8af4;border:0.8400000000000001px solid #fff;box-sizing:border-box"></div>
<svg style="left:557px;top:485px" width="8" height="6" viewBox="0 0 8 6"><path d="M1 5l3-3.4L7 5" fill="none" stroke="#fff" stroke-width="1"/></svg>
<svg style="left:569px;top:484px" width="11" height="9" viewBox="0 0 11 9" fill="none" stroke="#fff" stroke-width=".9"><path d="M.6 3.2h1.8L4.6 1v7L2.4 5.8H.6z" fill="#fff" stroke="none"/><path d="M6 2.8c.8.9.8 2.5 0 3.4M7.5 1.6c1.5 1.6 1.5 4.2 0 5.8"/></svg>
<div class="r" style="left:584.3px;top:483.5px;width:3px;height:8px;background:#fff;border-radius:1.5px;"></div>
<div class="r" style="left:583px;top:491.5px;width:5.6px;height:1px;background:#e8eef5;"></div>
<div class="r" style="left:594.5px;top:484px;width:7px;height:7.5px;background:transparent;border:0.9px solid #fff;box-sizing:border-box;"></div>
<div class="r" style="left:596px;top:486px;width:3px;height:3px;background:#fff;"></div>
<div class="c" style="left:599px;top:488.5px;width:5px;height:5px;background:#e0262d"></div>
<div class="c" style="left:607px;top:484.5px;width:9px;height:9px;background:#e8d728"></div>
<div class="r" style="left:609.5px;top:488.3px;width:4.5px;height:1.4px;background:#3a7a2a;"></div>
<div class="r" style="left:611px;top:486.6px;width:1.4px;height:4.6px;background:#3a7a2a;"></div>
<div class="r" style="left:620px;top:486px;width:8.5px;height:5px;background:#f4f6f8;border-radius:1px;"></div>
<div class="r" style="left:620px;top:487.5px;width:2.6px;height:2px;background:#2e70b0;"></div>
<svg style="left:633px;top:484px" width="9" height="9" viewBox="0 0 9 9" fill="none" stroke="#fff" stroke-width=".9"><path d="M1 8c0-3.5 3-6.5 7-6.5M3.2 8c0-2.4 2-4.4 4.8-4.4M5.4 8c0-1.2 1-2.2 2.6-2.2"/><path d="M1.5 3.5l2.5 5" stroke-width=".7"/></svg>
<span class="t" style="left:646.50px;top:487.00px;font-size:6.6px;color:#fff;transform:scaleX(0.8441);">УКР</span>
<span class="t" style="left:672.00px;top:483.00px;font-size:6.4px;color:#fff;transform:scaleX(0.8741);">18:30</span>
<span class="t" style="left:665.00px;top:492.00px;font-size:6.4px;color:#fff;transform:scaleX(0.8741);">29.04.2022</span>
<div class="r" style="left:701.5px;top:484.3px;width:9px;height:7px;background:transparent;border:1px solid #fff;box-sizing:border-box;border-radius:1px;"></div>
<div class="r" style="left:703.3px;top:486.5px;width:5.4px;height:0.8px;background:#fff;"></div>
<div class="r" style="left:703.3px;top:488.3px;width:4px;height:0.8px;background:#fff;"></div>
<div class="c" style="left:706.5px;top:489px;width:6.6px;height:6.6px;background:#2d5fa8;border:0.8px solid #fff;box-sizing:border-box"></div>
<span class="t" style="left:708.80px;top:492.00px;font-size:4.8px;color:#fff;font-weight:700;transform:scaleX(0.8990);">1</span>
</div></div>
<div class="r" style="left:16px;top:8px;width:992px;height:40px;background:#3c4043;border-radius:8px;"></div>
<svg style="left:32px;top:16px" width="24" height="24" viewBox="0 0 80 80">
<defs><clipPath id="a0c"><circle cx="40" cy="40" r="40"/></clipPath>
<linearGradient id="a0g" x1="0" y1="0" x2="1" y2="0"><stop offset="0" stop-color="#b3dff0"/><stop offset=".4" stop-color="#cbe5ef"/><stop offset="1" stop-color="#d5dde2"/></linearGradient></defs>
<g clip-path="url(#a0c)"><rect width="80" height="80" fill="url(#a0g)"/>
<path d="M2 72C7 58 14 50 24 46.500L40 42l18 1c10 2 16 8 19 18l3 19H0z" fill="#1e1e21"/>
<path d="M43.500 4C33 4 28 12 28 22c0 12-3 20-5 30-3 10-3 18 0 24 7 0 11-8 15-16h20c4-4 4-12 2-20-2-10 0-18-3-26C54 7 50 4 43.500 4z" fill="#35251f"/>
<ellipse cx="47" cy="28" rx="8.300" ry="12.600" fill="#dbb5a7"/>
<path d="M43 37h9v10h-9z" fill="#cfa596"/>
<path d="M50 41c6 4 10 12 10 24l-2 15H40c4-10 6-24 4-34z" fill="#121214"/>
<path d="M44 5c-8 2-11 10-11 21 0 10-3 20-6 30-2 8-3 14-3 19 6-3 11-13 14-23 2-8 1-16 1-24 0-10 3-16 8-18z" fill="#3d2a23"/>
<path d="M47 9.500c5 0 9 6.500 9 16.500 0 8 2 14 4 20 1 6 0 12-2 14-3-6-4-14-4-20 1-10 0-21-7-30.500z" fill="#2f201b"/>
<path d="M43.800 34.300c2 .9 4.600.9 6.400 0-.8 1.900-5.200 2.100-6.400 0z" fill="#d8507a"/>
<path d="M41.500 24.500h4M49.500 24.500h3.500" stroke="#6a4a42" stroke-width="1"/>
</g></svg>
<span class="t" style="left:72.50px;top:19.00px;font-size:15px;color:#fff;font-weight:700;transform:scaleX(0.9378);">Дана Олегівна Сопова на екрані</span>
<div class="r" style="left:742px;top:63.6px;width:258px;height:142.5px;background:#3c4043;border-radius:8px;border:4px solid #669df6;"></div>
<div class="r" style="left:742px;top:226px;width:266px;height:150px;background:#3c4043;border-radius:8px;"></div>
<div class="r" style="left:742px;top:388px;width:266px;height:149px;background:#3c4043;border-radius:8px;"></div>
<div class="c" style="left:813px;top:76.500px;width:124px;height:124px;background:#565a5e"></div>
<svg style="left:835px;top:98.7px" width="80" height="80" viewBox="0 0 80 80">
<defs><clipPath id="a1c"><circle cx="40" cy="40" r="40"/></clipPath>
<linearGradient id="a1g" x1="0" y1="0" x2="1" y2="0"><stop offset="0" stop-color="#b3dff0"/><stop offset=".4" stop-color="#cbe5ef"/><stop offset="1" stop-color="#d5dde2"/></linearGradient></defs>
<g clip-path="url(#a1c)"><rect width="80" height="80" fill="url(#a1g)"/>
<path d="M2 72C7 58 14 50 24 46.500L40 42l18 1c10 2 16 8 19 18l3 19H0z" fill="#1e1e21"/>
<path d="M43.500 4C33 4 28 12 28 22c0 12-3 20-5 30-3 10-3 18 0 24 7 0 11-8 15-16h20c4-4 4-12 2-20-2-10 0-18-3-26C54 7 50 4 43.500 4z" fill="#35251f"/>
<ellipse cx="47" cy="28" rx="8.300" ry="12.600" fill="#dbb5a7"/>
<path d="M43 37h9v10h-9z" fill="#cfa596"/>
<path d="M50 41c6 4 10 12 10 24l-2 15H40c4-10 6-24 4-34z" fill="#121214"/>
<path d="M44 5c-8 2-11 10-11 21 0 10-3 20-6 30-2 8-3 14-3 19 6-3 11-13 14-23 2-8 1-16 1-24 0-10 3-16 8-18z" fill="#3d2a23"/>
<path d="M47 9.500c5 0 9 6.500 9 16.500 0 8 2 14 4 20 1 6 0 12-2 14-3-6-4-14-4-20 1-10 0-21-7-30.500z" fill="#2f201b"/>
<path d="M43.800 34.300c2 .9 4.600.9 6.400 0-.8 1.900-5.200 2.100-6.400 0z" fill="#d8507a"/>
<path d="M41.500 24.500h4M49.500 24.500h3.500" stroke="#6a4a42" stroke-width="1"/>
</g></svg>
<div class="c" style="left:970px;top:75.800px;width:26px;height:26px;background:#1a73e8"></div>
<div class="r" style="left:975.3px;top:84.3px;width:3.3px;height:9.2px;background:#fff;border-radius:1.650px;"></div>
<div class="r" style="left:981.35px;top:81.9px;width:3.3px;height:13.8px;background:#fff;border-radius:1.650px;"></div>
<div class="r" style="left:987.4px;top:84.3px;width:3.3px;height:9.2px;background:#fff;border-radius:1.650px;"></div>
<span class="t" style="left:758.00px;top:185.00px;font-size:14.5px;color:#fff;font-weight:700;transform:scaleX(0.9629);">Дана Олегівна Сопова</span>
<svg style="left:825.7px;top:255.9px" width="52.6" height="52.6" viewBox="0 0 53 53">
<defs><clipPath id="a2c"><circle cx="26.500" cy="26.500" r="26.500"/></clipPath></defs>
<g clip-path="url(#a2c)"><rect width="53" height="53" fill="#797473"/>
<path d="M10 33c0-12 5-22 17-23 9 0 14 7 14 17 0 6-1 10-3 12H14c-3-1-4-3-4-6z" fill="#4a3124"/>
<ellipse cx="30.500" cy="25.500" rx="7.800" ry="10.500" fill="#d9b09a"/>
<path d="M22 19c3-6 10-7 15-3-5 0-9 2-11 6-1 2-2 4-4 5z" fill="#4a3124"/>
<path d="M26 34l3 8 6-6-2-4z" fill="#cfa48f"/>
<path d="M5 46c1-6 6-9 13-10l7-1 4 9 6-8c4 1 6 4 7 8v10H5z" fill="#f1eeee"/>
<path d="M26.500 23.500h3M32.500 23.800h3" stroke="#5a3a30" stroke-width=".9"/><path d="M29.500 31.500h4" stroke="#b5564e" stroke-width="1"/>
</g></svg>
<div class="c" style="left:873.700px;top:255px;width:55px;height:55px;background:#3c4043"></div>
<svg style="left:875px;top:256.3px" width="52.4" height="52.4" viewBox="0 0 54 54">
<defs><clipPath id="a3c"><circle cx="27" cy="27" r="27"/></clipPath>
<linearGradient id="a3g" x1="0" y1="0" x2="0" y2="1"><stop offset="0" stop-color="#c5cfdb"/><stop offset=".2" stop-color="#a9b7c9"/><stop offset=".62" stop-color="#8096b4"/><stop offset=".63" stop-color="#77775f"/><stop offset=".82" stop-color="#82806a"/><stop offset="1" stop-color="#8d8e92"/></linearGradient></defs>
<g clip-path="url(#a3c)"><rect width="54" height="54" fill="url(#a3g)"/>
<path d="M0 8l54-3v4L0 13z" fill="#5f6c80" opacity=".7"/>
<path d="M0 16h54M0 24h54" stroke="#dfe6ee" stroke-width="1.200" opacity=".55"/>
<path d="M6 10v24M14 10v24M36 10v24M44 10v24M50 10v24" stroke="#e9eef4" stroke-width="1.300" opacity=".5"/>
<ellipse cx="24" cy="14" rx="2.600" ry="3.200" fill="#d8b8a2"/><path d="M25 11c3 0 4 4 3 9l-3-2z" fill="#c9a47a"/>
<path d="M18 22c2-4 8-5 11-2 2 4 3 12 2 20l-1 14H17c-1-6-1-12 0-18-1-5-1-10 1-14z" fill="#8fa3c4"/>
<path d="M17 38c3 2 8 2 12 0l1 16H16z" fill="#7d93b8"/>
</g></svg>
<span class="t" style="left:843.00px;top:329.00px;font-size:15.5px;color:#fff;font-weight:700;transform:scaleX(0.8718);">Ще 7 осіб</span>
<svg style="left:835px;top:423px" width="80" height="80" viewBox="0 0 80 80">
<defs><clipPath id="a4c"><circle cx="40" cy="40" r="40"/></clipPath></defs>
<g clip-path="url(#a4c)"><rect width="80" height="80" fill="#f2f0f0"/>
<path d="M8 80c-1-8 0-16 2-22 1-7 2-13 5-17 3-5 8-7 14-8l10-3 14 2c6 1 9 4 11 9 3 7 5 15 6 24l1 15z" fill="#6e5749"/>
<path d="M22 23.500c5-2 10-2 14 1l12-3.500c6 2 9 6 9 12-3 3-9 5.500-16 5.500-8 0-15-2-19-6-1-4-1-6 0-9z" fill="#3b2f2a"/>
<path d="M24.500 17c1-3 5-5 9-5 4 1 5.500 4 5.500 8l-2 8.500c-1 3-3 5-6 6l-4-3c-2-4.500-2.500-9.500-2.500-14.500z" fill="#e2b59b"/>
<path d="M31.500 30.500l8-8-1 12.500-5 3z" fill="#c98f6f"/>
<path d="M19.800 17c-1-6 1-11 5-13.500 2-2 4-1 6-3 1 2 3 1 5 2.500 2-1 4 0 5 2 3 2 3.500 6 2.500 10-2-2-4-3-6-2-2 3-6 4-9 4-2 2-3 5-3 8-2.500-2-4.500-4-5.500-8z" fill="#e9a99b"/>
<path d="M27 6c2-2 6-2 9 0M25 11c3-2 7-2 10 0" stroke="#d98f85" stroke-width=".8" fill="none"/>
<path d="M32.200 37.500v18M38.300 37.500v18" stroke="#e8e2dc" stroke-width="1"/>
<path d="M25 59c5-3 15-3 21 0l2 13c-7 3-18 3-25 0z" fill="#6b2f1f"/>
<path d="M17 57c2-3 6-4 9-2l2.500 8c0 3-2 6.500-5 6.500-3-1-5.500-4.500-6.500-8.500z" fill="#dcae92"/>
<path d="M44.500 55c3-2 7.500-1 9.500 2l1 8c-1 3-4 4.500-6.500 3.500-2.500-3-4-8-4-13.500z" fill="#dcae92"/>
<path d="M10 80c0-6 1-11 3-15l7 8 2 7zM72 80c0-6-2-12-5-17l-7 9-1 8z" fill="#8a7465"/>
<path d="M20 44c-2 4-3 8-3 12M60 42c2 4 3 8 3 12" stroke="#5a4438" stroke-width="1.500" fill="none" opacity=".6"/>
</g></svg>
<div class="c" style="left:971px;top:400.200px;width:24px;height:24px;background:#2a2d31"></div>
<svg style="left:975.50px;top:404.80px" width="15" height="15" viewBox="0 0 24 24"><path d="M19 11h-1.7c0 .74-.16 1.43-.43 2.05l1.23 1.23c.56-.98.9-2.09.9-3.28zm-4.02.17c0-.06.02-.11.02-.17V5c0-1.66-1.34-3-3-3S9 3.34 9 5v.18l5.98 5.99zM4.27 3L3 4.27l6.01 6.01V11c0 1.66 1.33 3 2.99 3 .22 0 .44-.03.65-.08l1.66 1.66c-.71.33-1.5.52-2.31.52-2.76 0-5.3-2.1-5.3-5.1H5c0 3.41 2.72 6.23 6 6.72V21h2v-3.28c.91-.13 1.77-.45 2.54-.9L19.73 21 21 19.73 4.27 3z" fill="#fff" /></svg>
<span class="t" style="left:758.00px;top:508.00px;font-size:14.5px;color:#fff;font-weight:700;transform:scaleX(0.8769);">Ви</span>
<span class="t" style="left:746.60px;top:523.00px;font-size:18.2px;color:rgba(208,211,214,.62);transform:scaleX(1.0970);">Активация Windows</span>
<span class="t" style="left:746.60px;top:548.00px;font-size:13.8px;color:rgba(208,211,214,.6);transform:scaleX(1.0863);">Чтобы активировать Windows,</span>
<span class="t" style="left:746.60px;top:569.00px;font-size:13.8px;color:rgba(208,211,214,.6);transform:scaleX(1.0853);">перейдите в раздел &quot;Параметры&quot;.</span>
<span class="t" style="left:24.00px;top:569.00px;font-size:16px;color:#fff;font-weight:700;transform:scaleX(0.9530);">18:30</span>
<div class="r" style="left:76px;top:569.5px;width:1px;height:15px;background:#9aa0a6;"></div>
<span class="t" style="left:89.00px;top:569.00px;font-size:16px;color:#fff;font-weight:700;transform:scaleX(1.0764);">jzn-writ-fth</span>
<div class="c" style="left:351.2px;top:557px;width:40px;height:40px;background:#ea4335"></div>
<div class="c" style="left:403.2px;top:557px;width:40px;height:40px;background:#ea4335"></div>
<div class="c" style="left:455.2px;top:557px;width:40px;height:40px;background:#3c4043"></div>
<div class="c" style="left:507.20000000000005px;top:557px;width:40px;height:40px;background:#3c4043"></div>
<div class="c" style="left:559.2px;top:557px;width:40px;height:40px;background:#3c4043"></div>
<div class="r" style="left:611px;top:557px;width:56.2px;height:40px;background:#ea4335;border-radius:20px;"></div>
<svg style="left:361.20px;top:567.00px" width="20" height="20" viewBox="0 0 24 24"><path d="M19 11h-1.7c0 .74-.16 1.43-.43 2.05l1.23 1.23c.56-.98.9-2.09.9-3.28zm-4.02.17c0-.06.02-.11.02-.17V5c0-1.66-1.34-3-3-3S9 3.34 9 5v.18l5.98 5.99zM4.27 3L3 4.27l6.01 6.01V11c0 1.66 1.33 3 2.99 3 .22 0 .44-.03.65-.08l1.66 1.66c-.71.33-1.5.52-2.31.52-2.76 0-5.3-2.1-5.3-5.1H5c0 3.41 2.72 6.23 6 6.72V21h2v-3.28c.91-.13 1.77-.45 2.54-.9L19.73 21 21 19.73 4.27 3z" fill="#fff" /></svg>
<svg style="left:413.05px;top:567.15px" width="20.5" height="20.5" viewBox="0 0 24 24"><path d="M9.56 8l-2-2-4.15-4.14L2 3.27 4.73 6H4c-.55 0-1 .45-1 1v10c0 .55.45 1 1 1h12c.21 0 .39-.08.55-.18L19.73 21l1.41-1.41-8.86-8.86L9.56 8zM5 16V8h1.73l8 8H5zm10-8v2.61l6 6V6.5l-4 4V7c0-.55-.45-1-1-1h-5.61l2 2H15z" fill="#fff" /></svg>
<svg style="left:463.00px;top:564.50px" width="24" height="24" viewBox="0 0 24 24"><path d="M21 7c0-1.38-1.12-2.5-2.5-2.5-.17 0-.34.02-.5.05V4c0-1.38-1.12-2.5-2.5-2.5-.23 0-.46.03-.67.09C14.46.66 13.56 0 12.5 0c-1.23 0-2.25.89-2.46 2.06C9.87 2.02 9.69 2 9.5 2 8.12 2 7 3.12 7 4.5v5.89c-.34-.31-.76-.54-1.22-.66L5.01 9.52c-.83-.23-1.7.09-2.19.83-.38.57-.4 1.31-.15 1.95l2.56 6.43C6.49 21.91 9.57 24 13 24c4.42 0 8-3.58 8-8V7zm-2 9c0 3.31-2.69 6-6 6-2.61 0-4.950-1.590-5.910-4.010l-2.600-6.540.530.140c.460.120.830.460 1 .900L7 15h2V4.500c0-.280.220-.500.500-.500s.500.220.500.500V12h2V2.500c0-.280.220-.500.500-.500s.500.220.500.500V12h2V4c0-.280.220-.500.500-.500s.500.220.500.500v8h2V7c0-.280.220-.500.500-.500s.500.220.500.500v9z" fill="#fff" /></svg>
<svg style="left:514.70px;top:564.20px" width="25" height="25" viewBox="0 0 24 24"><path d="M21 3H3c-1.110 0-2 .890-2 2v14c0 1.110.890 2 2 2h18c1.110 0 2-.890 2-2V5c0-1.110-.890-2-2-2zm0 16.020H3V4.980h18v14.040zM10 12H8l4-4 4 4h-2v4h-4v-4z" fill="#fff" /></svg>
<svg style="left:567.20px;top:565.30px" width="24" height="24" viewBox="0 0 24 24"><path d="M12 8c1.100 0 2-.900 2-2s-.900-2-2-2-2 .900-2 2 .900 2 2 2zm0 2c-1.100 0-2 .900-2 2s.900 2 2 2 2-.900 2-2-.900-2-2-2zm0 6c-1.100 0-2 .900-2 2s.900 2 2 2 2-.900 2-2-.900-2-2-2z" fill="#fff" /></svg>
<svg style="left:626.70px;top:564.40px" width="25.6" height="25.6" viewBox="0 0 24 24"><path d="M12 9c-1.600 0-3.150.250-4.600.720v3.100c0 .390-.230.740-.560.900-.980.490-1.870 1.120-2.660 1.850-.180.180-.430.280-.700.280-.280 0-.530-.110-.710-.290L.290 13.080c-.180-.170-.290-.420-.290-.700 0-.280.110-.530.290-.710C3.340 8.780 7.460 7 12 7s8.660 1.780 11.710 4.670c.180.180.290.430.290.710 0 .280-.110.530-.290.710l-2.480 2.480c-.180.180-.430.290-.710.290-.270 0-.520-.110-.700-.280-.790-.740-1.690-1.360-2.670-1.850-.330-.160-.560-.500-.560-.900v-3.100C15.150 9.250 13.600 9 12 9z" fill="#fff" /></svg>
<svg style="left:826.40px;top:565.20px" width="24" height="24" viewBox="0 0 24 24"><path d="M11 7h2v2h-2zm0 4h2v6h-2zm1-9C6.480 2 2 6.480 2 12s4.480 10 10 10 10-4.480 10-10S17.520 2 12 2zm0 18c-4.410 0-8-3.590-8-8s3.590-8 8-8 8 3.590 8 8-3.590 8-8 8z" fill="#fff" stroke="#fff" stroke-width=".7" stroke-linejoin="round"/></svg>
<svg style="left:872.50px;top:563.80px" width="27" height="27" viewBox="0 0 24 24"><path d="M9 13.750c-2.340 0-7 1.170-7 3.500V19h14v-1.750c0-2.330-4.660-3.500-7-3.500zM4.340 17c.840-.580 2.870-1.250 4.660-1.250s3.820.670 4.660 1.250H4.340zM9 12c1.930 0 3.500-1.570 3.500-3.500S10.930 5 9 5 5.500 6.570 5.500 8.500 7.070 12 9 12zm0-5c.830 0 1.500.670 1.500 1.500S9.830 10 9 10s-1.500-.670-1.500-1.500S8.170 7 9 7zm7.040 6.810c1.160.840 1.960 1.960 1.960 3.440V19h4v-1.750c0-2.020-3.500-3.170-5.960-3.440zM15 12c1.930 0 3.500-1.570 3.500-3.500S16.930 5 15 5c-.540 0-1.040.130-1.500.350.630.890 1 1.980 1 3.150s-.370 2.260-1 3.150c.460.220.960.350 1.500.350z" fill="#fff" stroke="#fff" stroke-width=".8" stroke-linejoin="round"/></svg>
<svg style="left:922.00px;top:565.20px" width="24" height="24" viewBox="0 0 24 24"><path d="M4 4h16v12H5.170L4 17.170V4m0-2c-1.100 0-1.990.900-1.990 2L2 22l4-4h14c1.100 0 2-.900 2-2V4c0-1.100-.900-2-2-2H4zm2 10h8v2H6v-2zm0-3h12v2H6V9zm0-3h12v2H6V6z" fill="#fff" stroke="#fff" stroke-width=".7" stroke-linejoin="round"/></svg>
<svg style="left:971.00px;top:564.50px" width="24" height="24" viewBox="0 0 24 24"><path d="M12 2l-5.500 9h11L12 2zm0 3.840L13.930 9h-3.870L12 5.840zM17.500 13c-2.490 0-4.500 2.010-4.500 4.500s2.010 4.500 4.500 4.500 4.500-2.010 4.500-4.500-2.010-4.500-4.500-4.500zm0 7c-1.380 0-2.500-1.120-2.500-2.500s1.120-2.500 2.500-2.500 2.500 1.120 2.500 2.500-1.120 2.500-2.500 2.500zM3 21.500h8v-8H3v8zm2-6h4v4H5v-4z" fill="#fff" stroke="#fff" stroke-width=".8" stroke-linejoin="round"/></svg>
<div class="r" style="left:0px;top:616px;width:1023px;height:1.2px;background:#46366a;"></div>
<div class="r" style="left:0px;top:617px;width:1023px;height:4px;background:#6b4a9e;"></div>
<div class="r" style="left:240px;top:617px;width:45px;height:4px;background:#8a6cb8;"></div>
<div class="c" style="left:887.500px;top:548.700px;width:18.600px;height:18.600px;background:rgba(128,132,137,.92)"></div>
<span class="t" style="left:891.25px;top:553.00px;font-size:10.5px;color:#fff;font-weight:700;transform:scaleX(0.9846);">10</span>
</div></body></html>
